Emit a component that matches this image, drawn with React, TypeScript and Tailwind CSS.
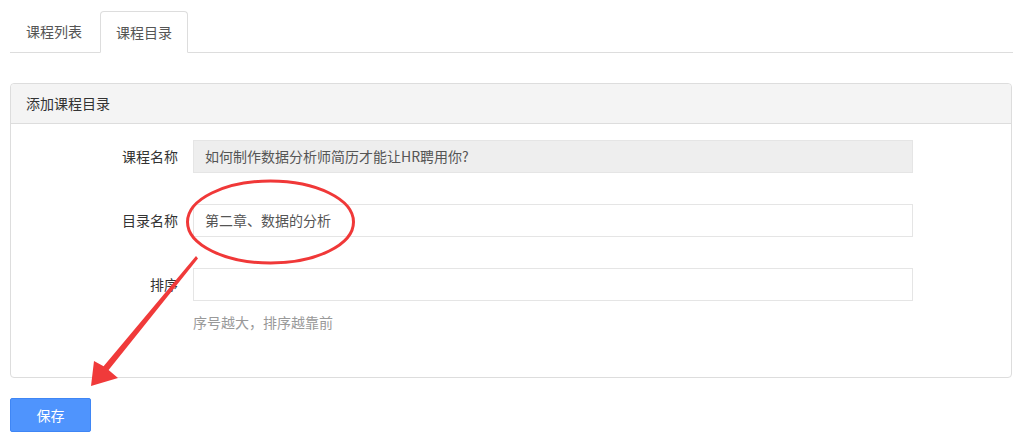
import React from "react";

const font = { fontFamily: '"Microsoft YaHei", "Noto Sans CJK SC", "Noto Sans", sans-serif' };

export default function App() {
  return (
    <div className="relative w-[1024px] h-[447px] bg-white text-[14px] text-[#333]" style={font}>
      <div className="px-[10px] pt-[11px]">
        {/* Tabs */}
        <div className="flex border-b border-[#ddd] w-[1003px]">
          <div className="h-[41px] px-[16px] flex items-center text-[#555] mr-[2px]">课程列表</div>
          <div className="h-[42px] -mb-px px-[15px] flex items-center text-[#555] bg-white border border-[#ddd] border-b-white rounded-t-[4px] w-[88px] justify-center">
            课程目录
          </div>
        </div>

        {/* Panel */}
        <div className="mt-[30px] w-[1002px] h-[295px] border border-[#ddd] rounded-[4px] flex flex-col">
          <div className="h-[40px] bg-[#f4f4f4] border-b border-[#ddd] flex items-center px-[15px] rounded-t-[4px]">
            添加课程目录
          </div>
          <div className="pt-[16px] flex flex-col">
            <div className="flex items-center h-[33px]">
              <div className="w-[167px] text-right">课程名称</div>
              <div className="ml-[15px] w-[720px] h-[33px] bg-[#eeeeee] border border-[#e5e5e5] flex items-center px-[11px] text-[#555]">
                如何制作数据分析师简历才能让HR聘用你?
              </div>
            </div>
            <div className="flex items-center h-[33px] mt-[31px]">
              <div className="w-[167px] text-right">目录名称</div>
              <div className="ml-[15px] w-[720px] h-[33px] bg-white border border-[#e5e5e5] flex items-center px-[11px] text-[#555]">
                第二章、数据的分析
              </div>
            </div>
            <div className="flex items-center h-[33px] mt-[31px]">
              <div className="w-[167px] text-right">排序</div>
              <div className="ml-[15px] w-[720px] h-[33px] bg-white border border-[#e5e5e5]" />
            </div>
            <div className="ml-[182px] mt-[11px] text-[#999] text-[14px] leading-[20px]">序号越大，排序越靠前</div>
          </div>
        </div>

        <button className="mt-[20px] w-[81px] h-[34px] bg-[#4f94fd] border border-[#3f86f5] rounded-[2px] text-white text-[14px] flex items-center justify-center">
          保存
        </button>
      </div>

      {/* Annotation overlay */}
      <svg className="absolute left-0 top-0 pointer-events-none" width="1024" height="447">
        <ellipse cx="270.5" cy="222" rx="83" ry="41" fill="none" stroke="#f03838" strokeWidth="3" />
        <polygon
          points="196,256 198,258.5 108.6,370 118,378 91,386 94,361 103.6,366.2"
          fill="#f03a3a"
        />
      </svg>
    </div>
  );
}
